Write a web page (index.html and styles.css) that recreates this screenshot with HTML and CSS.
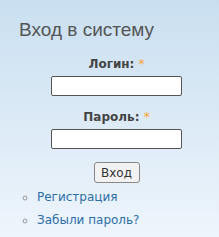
FILE: index.html
```html
<!DOCTYPE html>
<html>
<head>
<meta charset="utf-8">
<link rel="stylesheet" href="styles.css">
</head>
<body>
<div class="block">
  <h2 class="title">Вход в систему</h2>
  <form class="form">
    <div class="field">
      <label class="label">Логин: <span class="req">*</span></label>
      <input class="input" type="text">
    </div>
    <div class="field">
      <label class="label">Пароль: <span class="req">*</span></label>
      <input class="input" type="password">
    </div>
    <div class="actions"><button class="btn" type="button">Вход</button></div>
  </form>
  <ul class="links">
    <li><a href="#">Регистрация</a></li>
    <li><a href="#">Забыли пароль?</a></li>
  </ul>
</div>
</body>
</html>
```
FILE: styles.css
```css
html, body { margin: 0; padding: 0; }
body { width: 219px; height: 237px; overflow: hidden; }
.block {
  height: 237px;
  box-sizing: border-box;
  background: linear-gradient(#c9dff0, #eef5fc);
  padding: 18px 0 0 19px;
  font-family: "DejaVu Sans", sans-serif;
}
.title {
  margin: 0;
  font-family: "Liberation Sans", Arial, sans-serif;
  font-weight: normal;
  font-size: 19px;
  line-height: 24px;
  color: #555;
}
.form { margin: 14px 0 0 0; width: 195px; }
.field { display: flex; flex-direction: column; align-items: center; margin-bottom: 13px; }
.label { font-size: 12px; font-weight: bold; color: #444; line-height: 16px; margin-bottom: 4px; }
.req { color: #f7a334; font-weight: normal; }
.input {
  box-sizing: border-box;
  width: 131px; height: 20px;
  border: 1px solid #555;
  border-radius: 2px;
  background: #fff;
  margin: 0;
}
.actions { display: flex; justify-content: center; margin-top: 1px; }
.btn {
  box-sizing: border-box;
  width: 46px; height: 21px;
  font-family: "DejaVu Sans", sans-serif;
  font-size: 12px;
  color: #333;
  background: #f2f2f2;
  border: 1px solid #888;
  border-radius: 3px;
  padding: 0;
}
.links { list-style: circle; margin: 3px 0 0 0; padding: 0 0 0 18px; color: #999; font-size: 12px; line-height: 23px; }
.links a { color: #2b6ea6; text-decoration: none; }
```
